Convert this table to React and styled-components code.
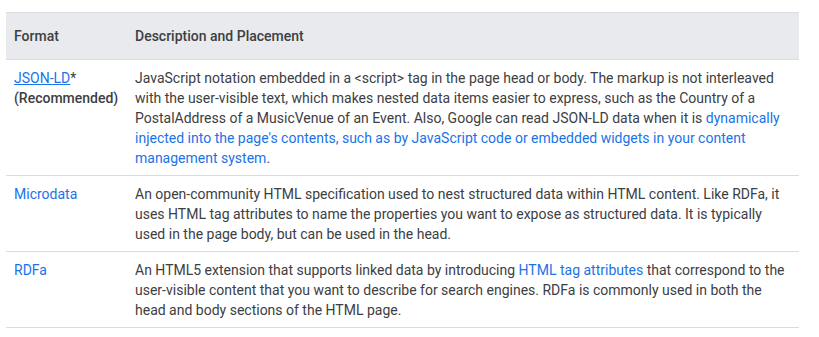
import React from "react"
import styled, { createGlobalStyle } from "styled-components"

const GlobalStyle = createGlobalStyle`
  body {
    margin: 0;
    background: #fff;
    font-family: Roboto, "Noto Sans", sans-serif;
  }
`

const Page = styled.div`
  padding: 12px 20px 0 6px;
`
const Table = styled.table`
  width: 793px;
  table-layout: fixed;
  border-collapse: collapse;
  font-size: 14px;
  line-height: 20px;
  color: #3c4043;
`
const Th = styled.th`
  box-sizing: border-box;
  width: ${(p) => p.$width || "auto"};
  background: #e8eaed;
  border-top: 1px solid #dadce0;
  border-bottom: 1px solid #dadce0;
  padding: 13px 8px 13px;
  text-align: left;
  font-weight: 500;
  color: #3c4043;
`
const Td = styled.td`
  vertical-align: top;
  padding: 8px 8px 7px;
  border-bottom: 1px solid #dadce0;
`
const FormatLink = styled.a`
  color: #1a73e8;
  text-decoration: ${(p) => (p.$underline ? "underline" : "none")};
`
const Strong = styled.span`
  font-weight: 500;
  color: #3c4043;
`

const rows = [
  {
    format: (
      <>
        <FormatLink href="#" $underline>JSON-LD</FormatLink>*
        <br />
        <Strong>(Recommended)</Strong>
      </>
    ),
    desc: (
      <>
        JavaScript notation embedded in a &lt;script&gt; tag in the page head or body. The markup is not
        interleaved with the user-visible text, which makes nested data items easier to express, such as the
        Country of a PostalAddress of a MusicVenue of an Event. Also, Google can read JSON-LD data when it is{" "}
        <FormatLink href="#">
          dynamically injected into the page's contents, such as by JavaScript code or embedded widgets in your
          content management system
        </FormatLink>
        .
      </>
    ),
  },
  {
    format: <FormatLink href="#">Microdata</FormatLink>,
    desc: (
      <>
        An open-community HTML specification used to nest structured data within HTML content. Like RDFa, it
        uses HTML tag attributes to name the properties you want to expose as structured data. It is typically
        used in the page body, but can be used in the head.
      </>
    ),
  },
  {
    format: <FormatLink href="#">RDFa</FormatLink>,
    desc: (
      <>
        An HTML5 extension that supports linked data by introducing{" "}
        <FormatLink href="#">HTML tag attributes</FormatLink> that correspond to the user-visible content that
        you want to describe for search engines. RDFa is commonly used in both the head and body sections of the
        HTML page.
      </>
    ),
  },
]

const App = () => {
  return (
    <Page>
      <GlobalStyle />
      <Table>
        <thead>
          <tr>
            <Th $width="121px">Format</Th>
            <Th>Description and Placement</Th>
          </tr>
        </thead>
        <tbody>
          {rows.map((r, i) => (
            <tr key={i}>
              <Td>{r.format}</Td>
              <Td>{r.desc}</Td>
            </tr>
          ))}
        </tbody>
      </Table>
    </Page>
  )
}

export default App
